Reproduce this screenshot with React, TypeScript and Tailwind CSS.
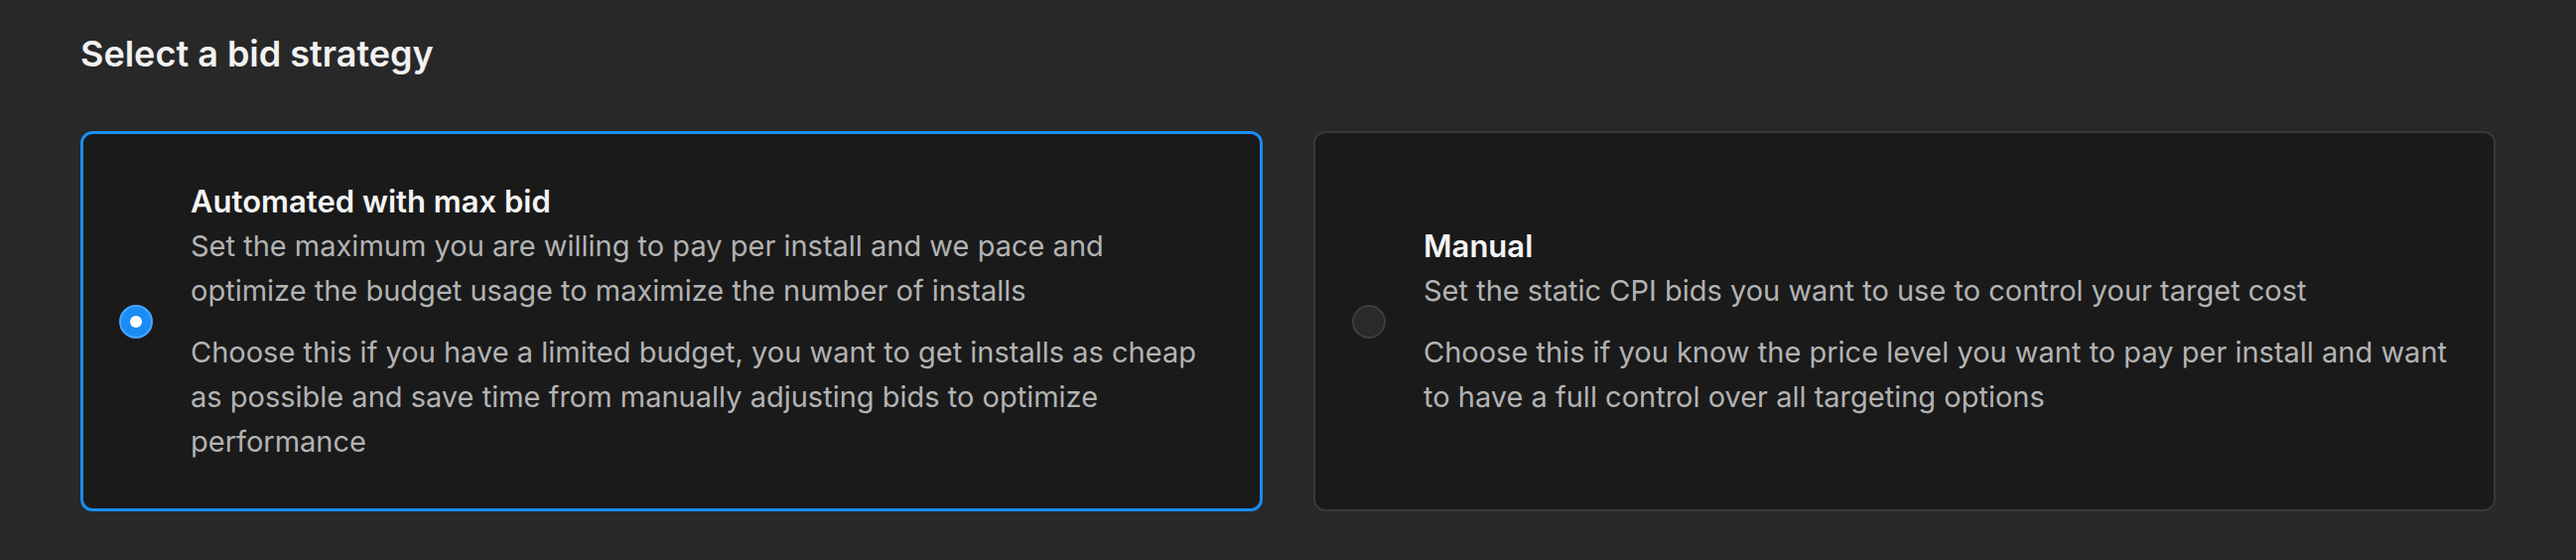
import React, { useState } from "react";

type Strategy = {
  id: string;
  title: string;
  summary: string;
  detail: string;
};

const strategies: Strategy[] = [
  {
    id: "auto",
    title: "Automated with max bid",
    summary:
      "Set the maximum you are willing to pay per install and we pace and optimize the budget usage to maximize the number of installs",
    detail:
      "Choose this if you have a limited budget, you want to get installs as cheap as possible and save time from manually adjusting bids to optimize performance",
  },
  {
    id: "manual",
    title: "Manual",
    summary: "Set the static CPI bids you want to use to control your target cost",
    detail:
      "Choose this if you know the price level you want to pay per install and want to have a full control over all targeting options",
  },
];

function Radio({ checked }: { checked: boolean }) {
  if (checked) {
    return (
      <span className="flex h-[34px] w-[34px] shrink-0 items-center justify-center rounded-full border-2 border-[#4aa6ff] bg-[#1a8df5]">
        <span className="h-[12px] w-[12px] rounded-full bg-white" />
      </span>
    );
  }
  return <span className="h-[34px] w-[34px] shrink-0 rounded-full border-2 border-[#3d3d3d] bg-[#2a2a2a]" />;
}

export default function App() {
  const [selected, setSelected] = useState("auto");

  return (
    <div
      className="min-h-screen bg-[#282828] px-[81px] pt-[34px] pb-[49px]"
      style={{ fontFamily: "Inter, 'Noto Sans', sans-serif" }}
    >
      <h2 className="text-[36px] leading-[40px] font-semibold text-[#f2f2f2]">Select a bid strategy</h2>

      <div className="mt-[58px] grid grid-cols-2 gap-[51px]">
        {strategies.map((s) => {
          const active = s.id === selected;
          return (
            <button
              key={s.id}
              type="button"
              onClick={() => setSelected(s.id)}
              className={
                active
                  ? "flex items-center gap-[38px] rounded-xl border-[3px] border-[#1a8cf0] bg-[#1a1a1a] py-[45px] pr-[45px] pl-[36px] text-left"
                  : "flex items-center gap-[38px] rounded-xl border-2 border-[#383838] bg-[#1a1a1a] py-[45px] pr-[32px] pl-[37px] text-left"
              }
            >
              <Radio checked={active} />
              <div className="flex-1 text-[29px] leading-[45px]">
                <p className="text-[31px] font-semibold text-[#f4f4f4]">{s.title}</p>
                <p className="text-[#b3b3b3]">{s.summary}</p>
                <p className="mt-[17px] text-[#b3b3b3]">{s.detail}</p>
              </div>
            </button>
          );
        })}
      </div>
    </div>
  );
}
